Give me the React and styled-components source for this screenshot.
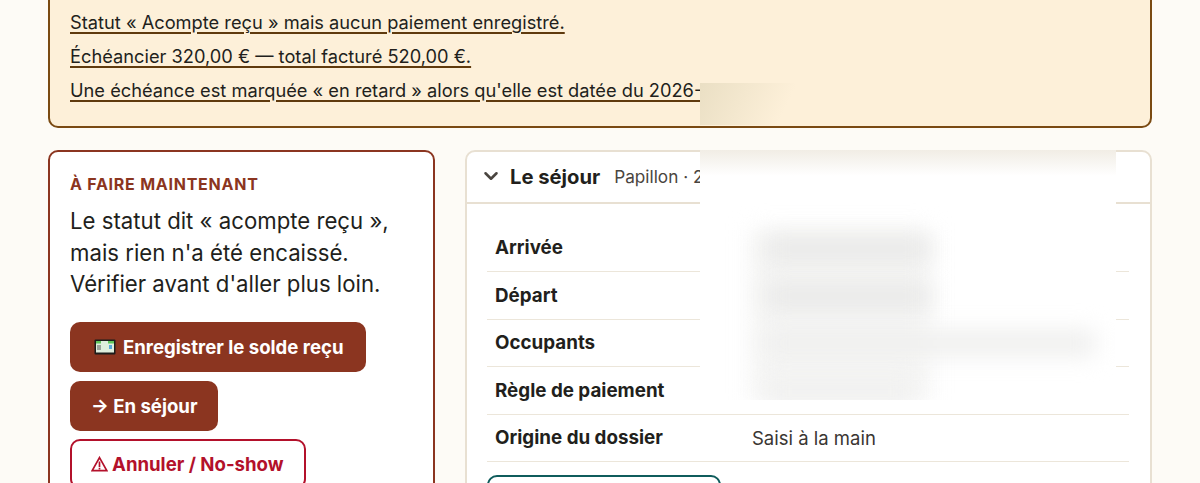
import React from 'react';
import styled, { createGlobalStyle } from 'styled-components';
import { ChevronDown } from 'lucide-react';

const GlobalStyle = createGlobalStyle`
  html, body {
    margin: 0;
    height: 483px;
    overflow: hidden;
    background: #fdfbf6;
  }
  * {
    box-sizing: border-box;
  }
`;

const Page = styled.div`
  position: relative;
  height: 483px;
  overflow: hidden;
  padding: 0 48px;
  font-family: Inter, "Liberation Sans", sans-serif;
  color: #221f1c;
`;

const Alert = styled.div`
  position: relative;
  margin-top: -20px;
  height: 148px;
  padding: 29px 20px 0;
  background: #fdf0d9;
  border: 2px solid #7a4a12;
  border-radius: 10px;
`;

const AlertLine = styled.p`
  margin: 0 0 11.75px;
  font-size: 18.25px;
  line-height: 22px;
  text-decoration: underline;
  text-decoration-color: #5f3a0d;
  text-decoration-thickness: 1.5px;
  text-underline-offset: 3px;
`;

const Columns = styled.div`
  display: grid;
  grid-template-columns: 387px 687px;
  gap: 30px;
  margin-top: 22px;
  align-items: start;
`;

const ActionCard = styled.section`
  height: 400px;
  padding: 22px 20px;
  background: #fff;
  border: 2px solid #8b3520;
  border-radius: 10px;
`;

const Eyebrow = styled.div`
  font-size: 16px;
  line-height: 20px;
  font-weight: 700;
  letter-spacing: 0.75px;
  color: #8b3520;
`;

const Lead = styled.p`
  margin: 11px 0 22px;
  font-size: 22.2px;
  line-height: 31.6px;
`;

const Actions = styled.div`
  display: flex;
  flex-direction: column;
  align-items: flex-start;
  gap: 8.75px;
`;

const Button = styled.button`
  display: flex;
  align-items: center;
  gap: ${(p) => p.$gap || 4}px;
  height: 50px;
  padding: ${(p) => p.$pad || '0 22px'};
  font-family: inherit;
  font-size: 18.6px;
  font-weight: 700;
  border-radius: 10px;
  border: ${(p) => (p.$outline ? '2px solid #b3112b' : 'none')};
  background: ${(p) => (p.$outline ? '#fff' : '#8b3520')};
  color: ${(p) => (p.$outline ? '#b3112b' : '#fff')};
`;

const StayCard = styled.section`
  height: 400px;
  background: #fff;
  border: 2px solid #e8e0d2;
  border-radius: 10px;
`;

const StayHeader = styled.div`
  display: flex;
  align-items: center;
  height: 52px;
  padding: 0 13px 2px;
  border-bottom: 2px solid #e8e0d2;
`;

const StayTitle = styled.h2`
  margin: 0 14px 0 8px;
  font-size: 20.2px;
  font-weight: 700;
`;

const StaySub = styled.span`
  font-size: 17.2px;
  color: #4a4540;
`;

const Rows = styled.div`
  padding: 20.5px 21px 0 20px;
`;

const Row = styled.div`
  display: grid;
  grid-template-columns: 257px 1fr;
  align-items: center;
  height: 47.5px;
  padding-left: 8px;
  border-bottom: 1.5px solid #ece6da;
`;

const RowLabel = styled.div`
  font-size: 18.8px;
  font-weight: 700;
`;

const RowValue = styled.div`
  font-size: 18.5px;
  color: #3a3632;
`;

const TealButton = styled.button`
  display: block;
  width: 234px;
  height: 50px;
  margin-top: 13px;
  background: #fff;
  border: 2px solid #0f5c5c;
  border-radius: 10px;
`;

const Redaction = styled.div`
  position: absolute;
  left: 700px;
  top: 150px;
  width: 416px;
  height: 250px;
  overflow: hidden;
  background: #fff;
`;

const RedactionTop = styled.div`
  position: absolute;
  inset: 0 0 auto 0;
  height: 26px;
  background: linear-gradient(#f1ede5, #fff);
`;

const Smudge = styled.div`
  position: absolute;
  left: ${(p) => p.$x}px;
  top: ${(p) => p.$y}px;
  width: ${(p) => p.$w}px;
  height: ${(p) => p.$h || 26}px;
  background: ${(p) => p.$tone};
  filter: blur(11px);
`;

const AlertSmudge = styled.div`
  position: absolute;
  left: 650px;
  top: 101px;
  width: 95px;
  height: 42px;
  background: linear-gradient(115deg, #eadfc4, #fdf0d9 85%);
`;

function BanknoteIcon() {
  return (
    <svg width="22" height="16" viewBox="0 0 22 16" aria-hidden="true">
      <rect x="0.5" y="0.5" width="21" height="15" rx="1" fill="#1d1d1b" />
      <rect x="2" y="2" width="18" height="11.5" fill="#dfeedd" />
      <rect x="2" y="2" width="5" height="2.5" fill="#5fc45a" />
      <rect x="14" y="2" width="6" height="2.5" fill="#5fc45a" />
      <rect x="3" y="6" width="4" height="5" fill="#9aa39a" />
      <rect x="15" y="6" width="3" height="4" fill="#5aa9d8" />
    </svg>
  );
}

function WarningIcon() {
  return (
    <svg width="17" height="16" viewBox="0 0 17 16" aria-hidden="true">
      <path d="M8.5 1.6 15.8 14.6H1.2Z" fill="none" stroke="currentColor" strokeWidth="1.7" strokeLinejoin="miter" />
      <path d="M8.5 5.5V11M8.5 11.8V13.4" fill="none" stroke="currentColor" strokeWidth="1.7" />
    </svg>
  );
}

export default function App() {
  return (
    <>
      <GlobalStyle />
      <Page>
        <Alert>
          <AlertLine>Statut « Acompte reçu » mais aucun paiement enregistré.</AlertLine>
          <AlertLine>Échéancier 320,00 € — total facturé 520,00 €.</AlertLine>
          <AlertLine>Une échéance est marquée « en retard » alors qu'elle est datée du 2026-</AlertLine>
          <AlertSmudge />
        </Alert>
        <Columns>
          <ActionCard>
            <Eyebrow>À FAIRE MAINTENANT</Eyebrow>
            <Lead>
              Le statut dit « acompte reçu »,<br />
              mais rien n'a été encaissé.<br />
              Vérifier avant d'aller plus loin.
            </Lead>
            <Actions>
              <Button $gap={7} $pad="0 22px 0 24px"><BanknoteIcon /> Enregistrer le solde reçu</Button>
              <Button $pad="0 20px 0 21px">→ En séjour</Button>
              <Button $outline $pad="0 20px 0 19px"><WarningIcon /> Annuler / No-show</Button>
            </Actions>
          </ActionCard>
          <StayCard>
            <StayHeader>
              <ChevronDown size={22} strokeWidth={2.8} color="#4a4540" />
              <StayTitle>Le séjour</StayTitle>
              <StaySub>Papillon · 2</StaySub>
            </StayHeader>
            <Rows>
              <Row><RowLabel>Arrivée</RowLabel></Row>
              <Row><RowLabel>Départ</RowLabel></Row>
              <Row><RowLabel>Occupants</RowLabel></Row>
              <Row><RowLabel>Règle de paiement</RowLabel></Row>
              <Row><RowLabel>Origine du dossier</RowLabel><RowValue>Saisi à la main</RowValue></Row>
              <TealButton />
            </Rows>
          </StayCard>
        </Columns>
        <Redaction>
          <RedactionTop />
          <Smudge $x={50} $y={80} $w={180} $h={170} $tone="#f6f6f5" />
          <Smudge $x={65} $y={86} $w={165} $tone="#e9e9e8" />
          <Smudge $x={65} $y={133} $w={165} $tone="#e9e9e8" />
          <Smudge $x={65} $y={180} $w={330} $tone="#efefee" />
          <Smudge $x={65} $y={228} $w={150} $tone="#f0f0ef" />
        </Redaction>
      </Page>
    </>
  );
}
